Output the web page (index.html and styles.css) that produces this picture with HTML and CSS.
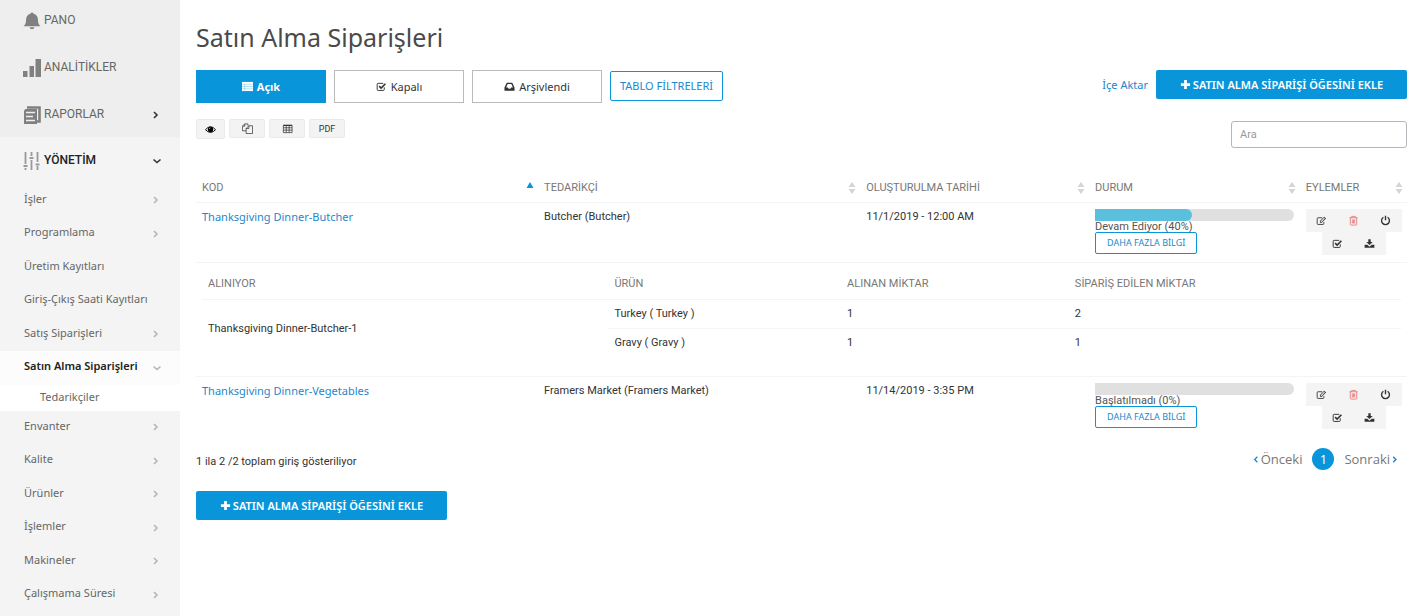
FILE: index.html
```html
<!DOCTYPE html>
<html lang="tr">
<head>
<meta charset="utf-8">
<title>Satın Alma Siparişleri</title>
<link rel="stylesheet" href="styles.css">
</head>
<body>
<svg class="sprite" aria-hidden="true">
  <symbol id="right" viewBox="0 0 8 10"><path d="M2 2 5 5 2 8" fill="none" stroke="currentColor" stroke-width="1.600"/></symbol>
  <symbol id="down" viewBox="0 0 10 8"><path d="M1.500 2.500 5 5.500 8.500 2.500" fill="none" stroke="currentColor" stroke-width="1.600"/></symbol>
  <symbol id="left" viewBox="0 0 8 10"><path d="M5.500 2 2.500 5 5.500 8" fill="none" stroke="currentColor" stroke-width="1.400"/></symbol>
  <symbol id="plus" viewBox="0 0 12 12"><path d="M4.500 1h3v3.500h3.500v3H7.500V11h-3V7.500H1v-3h3.500z" fill="currentColor"/></symbol>
  <symbol id="check" viewBox="0 0 14 12"><path d="M10.500 7v2.800a1.200 1.200 0 0 1-1.200 1.200H2.700a1.200 1.200 0 0 1-1.200-1.200V3.200A1.200 1.200 0 0 1 2.700 2h6.500" fill="none" stroke="currentColor" stroke-width="1.200"/><path d="M4 5.500 6.500 8 12 2.500" fill="none" stroke="currentColor" stroke-width="2"/></symbol>
  <symbol id="edit" viewBox="0 0 14 12"><path d="M10 8v2a1 1 0 0 1-1 1H2.500a1 1 0 0 1-1-1V3.500a1 1 0 0 1 1-1H8" fill="none" stroke="currentColor" stroke-width="1.100"/><path d="M5 6.700 10.500 1.200l2.300 2.300L7.300 9H5zM6 7v1h1L11.300 3.600l-1-1z" fill="currentColor" fill-rule="evenodd"/></symbol>
  <symbol id="trash" viewBox="0 0 12 12"><path d="M1.500 3h9M4 3V1.500h4V3M2.500 3v7.200q0 .8.800.8h5.400q.8 0 .8-.8V3M4.700 4.800v4.500M6 4.800v4.500M7.300 4.800v4.500" fill="none" stroke="currentColor" stroke-width=".9"/></symbol>
  <symbol id="power" viewBox="0 0 12 12"><path d="M3.700 2.500a4.300 4.300 0 1 0 4.600 0M6 .800v5" fill="none" stroke="currentColor" stroke-width="1.500"/></symbol>
  <symbol id="download" viewBox="0 0 14 12"><path d="M5.500.5h3V4h2.600L7 8 2.900 4h2.600zM.8 7.500h3.400L7 10l2.800-2.500h3.400v4H.8z" fill="currentColor"/></symbol>
  <symbol id="sort" viewBox="0 0 8 12"><path d="M4 0 7.500 5h-7zM.5 7h7L4 12z" fill="currentColor"/></symbol>
</svg>
<div class="app">
  <nav class="sidebar">
    <ul class="top">
      <li><a href="#"><svg class="ico" viewBox="0 0 18 18"><path d="M9 .5q1.300 0 1.500 1.300C13.500 2.500 15 5 15 8c0 3 .5 4.500 2.500 6.300H.5C2.500 12.500 3 11 3 8c0-3 1.500-5.500 4.500-6.200Q7.700.5 9 .5zM6.500 15.300h5q-.5 2-2.500 2t-2.500-2z" fill="currentColor"/></svg>PANO</a></li>
      <li><a href="#"><svg class="ico" viewBox="0 0 18 18"><path d="M0 12h4.500v6H0zM6.500 7h4.500v11H6.500zM12.500 0H18v18h-5.500z" fill="currentColor"/></svg>ANALİTİKLER</a></li>
      <li><a href="#"><svg class="ico" viewBox="0 0 18 18"><path d="M4 1.500h12.500v14H14" fill="none" stroke="currentColor" stroke-width="2.600"/><path d="M1 4.500 2.500 3H14v15H1z" fill="currentColor"/><path d="M3 6.500h9M3 10.500h7M3 14.500h9" stroke="#eee" stroke-width="1.300"/></svg>RAPORLAR<svg class="chev" viewBox="0 0 8 10"><use href="#right"/></svg></a></li>
      <li class="open"><a href="#"><svg class="ico" viewBox="0 0 18 18"><path d="M2.500 0v12M2.500 16v2M8.500 0v4M8.500 8v10M14.500 0v10M14.500 14v4" stroke="currentColor" stroke-width="1.800"/><path d="M.5 14h4M6.500 6h4M12.500 12.500h4" stroke="currentColor" stroke-width="2.200"/></svg>YÖNETİM<svg class="chev wide" viewBox="0 0 10 8"><use href="#down"/></svg></a></li>
    </ul>
    <ul class="sub">
      <li><a href="#">İşler<svg class="chev"><use href="#right"/></svg></a></li>
      <li><a href="#">Programlama<svg class="chev"><use href="#right"/></svg></a></li>
      <li><a href="#">Üretim Kayıtları</a></li>
      <li><a href="#">Giriş-Çıkış Saati Kayıtları</a></li>
      <li><a href="#">Satış Siparişleri<svg class="chev"><use href="#right"/></svg></a></li>
      <li class="active"><a href="#">Satın Alma Siparişleri<svg class="chev wide"><use href="#down"/></svg></a>
        <ul class="leaf"><li><a href="#">Tedarikçiler</a></li></ul></li>
      <li><a href="#">Envanter<svg class="chev"><use href="#right"/></svg></a></li>
      <li><a href="#">Kalite<svg class="chev"><use href="#right"/></svg></a></li>
      <li><a href="#">Ürünler<svg class="chev"><use href="#right"/></svg></a></li>
      <li><a href="#">İşlemler<svg class="chev"><use href="#right"/></svg></a></li>
      <li><a href="#">Makineler<svg class="chev"><use href="#right"/></svg></a></li>
      <li><a href="#">Çalışmama Süresi<svg class="chev"><use href="#right"/></svg></a></li>
    </ul>
  </nav>
  <main class="main">
    <h1>Satın Alma Siparişleri</h1>
    <div class="bar">
      <button class="tab on"><svg class="i" viewBox="0 0 12 12"><path d="M0 1h12v10H0z" fill="currentColor"/><path d="M0 3.500h12M0 6h12M0 8.500h12M3 3v8" stroke="#0895da" stroke-width=".3"/></svg>Açık</button>
      <button class="tab"><svg class="i"><use href="#check"/></svg>Kapalı</button>
      <button class="tab"><svg class="i" viewBox="0 0 12 12"><path d="M3 2h6l2.500 5v3.500H.5V7zM4 3.300 2.300 7h2l.7 1.500h2L7.700 7h2L8 3.300z" fill="currentColor" fill-rule="evenodd"/></svg>Arşivlendi</button>
      <button class="filter">TABLO FİLTRELERİ</button>
      <a class="import" href="#">İçe Aktar</a>
      <button class="add"><svg class="i"><use href="#plus"/></svg>SATIN ALMA SİPARİŞİ ÖĞESİNİ EKLE</button>
    </div>
    <div class="tools">
      <button class="tool eye" aria-label="Sütunlar"><svg class="i" viewBox="0 0 12 12"><path d="M.5 6.200Q6-.3 11.500 6.200 6 12.200.5 6.200z" fill="none" stroke="currentColor"/><circle cx="6" cy="6" r="2.900" fill="currentColor"/><path d="M4.600 5.500q.2-1 1.200-1.200" stroke="#fff" stroke-width=".7" fill="none"/></svg></button>
      <button class="tool" aria-label="Kopyala"><svg class="i" viewBox="0 0 12 12"><path d="M4.500 8.500h-4v-5l2.500-2.500h3.500v2M3 1v2.500H.5M7.500 3H11.500v8.500h-7V6zM7.500 3v3h-3" fill="none" stroke="currentColor" stroke-width=".8"/></svg></button>
      <button class="tool" aria-label="Tablo"><svg class="i" viewBox="0 0 12 12"><path d="M1.500 2.500h9.500v8H1.500zM1.500 5.200H11M1.500 7.800H11M4.600 2.500v8M7.800 2.500v8" fill="none" stroke="currentColor" stroke-width=".8"/><path d="M1.500 2h9.500v1.200H1.500z" fill="currentColor"/></svg></button>
      <button class="tool">PDF</button>
      <input class="search" type="search" placeholder="Ara" aria-label="Ara">
    </div>
    <table class="grid">
      <colgroup><col class="c1"><col class="c2"><col class="c3"><col class="c4"><col></colgroup>
      <thead><tr>
        <th><span class="th">KOD<svg class="asc" viewBox="0 0 8 12"><path d="M4 0 7.500 6h-7z" fill="currentColor"/></svg></span></th>
        <th><span class="th">TEDARİKÇİ<svg class="sort"><use href="#sort"/></svg></span></th>
        <th><span class="th">OLUŞTURULMA TARİHİ<svg class="sort"><use href="#sort"/></svg></span></th>
        <th><span class="th">DURUM<svg class="sort"><use href="#sort"/></svg></span></th>
        <th><span class="th">EYLEMLER<svg class="sort"><use href="#sort"/></svg></span></th>
      </tr></thead>
      <tbody>
        <tr>
          <td><a class="code" href="#">Thanksgiving Dinner-Butcher</a></td>
          <td>Butcher (Butcher)</td>
          <td>11/1/2019 - 12:00 AM</td>
          <td><div class="track"><div class="fill" style="width:49%"></div></div><div class="state">Devam Ediyor (40%)</div><button class="more">DAHA FAZLA BİLGİ</button></td>
          <td><div class="acts"><button aria-label="Düzenle"><svg class="i"><use href="#edit"/></svg></button><button class="del" aria-label="Sil"><svg class="i"><use href="#trash"/></svg></button><button aria-label="Kapat"><svg class="i"><use href="#power"/></svg></button><button aria-label="Tamamla"><svg class="i"><use href="#check"/></svg></button><button aria-label="İndir"><svg class="i"><use href="#download"/></svg></button></div></td>
        </tr>
        <tr class="detail"><td colspan="5">
          <table class="inner">
            <colgroup><col class="d1"><col class="d2"><col class="d3"><col></colgroup>
            <thead><tr><th>ALINIYOR</th><th>ÜRÜN</th><th>ALINAN MİKTAR</th><th>SİPARİŞ EDİLEN MİKTAR</th></tr></thead>
            <tbody>
              <tr><td rowspan="2">Thanksgiving Dinner-Butcher-1</td><td>Turkey ( Turkey )</td><td>1</td><td>2</td></tr>
              <tr><td>Gravy ( Gravy )</td><td>1</td><td>1</td></tr>
            </tbody>
          </table>
        </td></tr>
        <tr>
          <td><a class="code" href="#">Thanksgiving Dinner-Vegetables</a></td>
          <td>Framers Market (Framers Market)</td>
          <td>11/14/2019 - 3:35 PM</td>
          <td><div class="track"></div><div class="state">Başlatılmadı (0%)</div><button class="more">DAHA FAZLA BİLGİ</button></td>
          <td><div class="acts"><button aria-label="Düzenle"><svg class="i"><use href="#edit"/></svg></button><button class="del" aria-label="Sil"><svg class="i"><use href="#trash"/></svg></button><button aria-label="Kapat"><svg class="i"><use href="#power"/></svg></button><button aria-label="Tamamla"><svg class="i"><use href="#check"/></svg></button><button aria-label="İndir"><svg class="i"><use href="#download"/></svg></button></div></td>
        </tr>
      </tbody>
    </table>
    <div class="foot">
      <span>1 ila 2 /2 toplam giriş gösteriliyor</span>
      <div class="pager"><a href="#"><svg class="arr"><use href="#left"/></svg>Önceki</a><a class="cur" href="#">1</a><a href="#">Sonraki<svg class="arr"><use href="#right"/></svg></a></div>
    </div>
    <button class="add"><svg class="i"><use href="#plus"/></svg>SATIN ALMA SİPARİŞİ ÖĞESİNİ EKLE</button>
  </main>
</div>
</body>
</html>
```
FILE: styles.css
```css
* { box-sizing: border-box; }
body { margin: 0; font: 11px/16px Roboto, sans-serif; color: #333; background: #fff; }
ul { list-style: none; margin: 0; padding: 0; }
a { color: #1d87cc; text-decoration: none; }
button { font: inherit; color: inherit; cursor: pointer; margin: 0; }
.sprite { display: none; }
.app { display: flex; min-height: 100vh; }

.sidebar { flex: 0 0 180px; background: #f4f4f4; overflow: hidden; }
.sidebar a { display: flex; align-items: center; color: #666; }
.top { margin-top: -4px; background: #eee; font-size: 12px; }
.top a { height: 47px; padding: 0 17px 0 23px; }
.top .ico { width: 18px; height: 18px; margin-right: 3px; margin-top: 3px; color: #808080; }
.top .chev { color: #333; margin-top: 3px; }
.top .open { background: #f4f4f4; }
.top .open a { color: #222; font-weight: 500; padding-bottom: 2px; }
.top .open .ico { color: #999; }
.chev { width: 8px; height: 10px; margin: 3px 3px 0 auto; color: #b5b5b5; }
.chev.wide { width: 10px; height: 8px; margin-right: 1px; }
.sub a { height: 33px; padding: 0 17px 4px 24px; font-family: "Noto Sans", sans-serif; white-space: nowrap; }
.sub > li:nth-child(even) > a { height: 34px; }
.sub .active > a { background: #fcfcfc; color: #222; font-weight: 600; }
.sub .leaf { background: #fff; }
.sub .leaf a { height: 26px; padding: 0 0 2px 40px; }

.main { flex: 1; min-width: 0; padding: 22px 15px 22px 16px; }
h1 { margin: 0 0 18px; font: 400 25px/30px "Noto Sans", sans-serif; color: #4a4a4a; }
.i { width: 11px; height: 11px; flex: none; }
.bar { display: flex; align-items: flex-start; gap: 8px; font-family: "Noto Sans", sans-serif; }
.tab { display: flex; align-items: center; justify-content: center; gap: 4px; width: 130px; height: 33px; border: 1px solid #bbb; background: #fff; }
.tab.on { background: #0895da; border-color: #0895da; color: #fff; font-weight: 700; }
.filter { height: 30px; margin-top: 1px; padding: 0 9px; border: 1px solid #0895da; border-radius: 2px; background: #fff; color: #2089cd; }
.import { margin-left: auto; line-height: 30px; }
.add { display: flex; align-items: center; justify-content: center; gap: 2px; width: 251px; height: 29px; border: 0; border-radius: 2px; background: #0895da; color: #fff; font: 600 11px/16px "Noto Sans", sans-serif; }
.tools { display: flex; align-items: flex-start; gap: 4px; margin-top: 16px; }
.tool { display: flex; align-items: center; justify-content: center; width: 36px; height: 19px; padding: 0; border: 1px solid #eaeaea; border-radius: 2px; background: #f3f3f3; font-size: 9px; line-height: 12px; }
.eye { width: 29px; height: 20px; color: #000; }
.search { width: 176px; height: 27px; margin: 2px 0 0 auto; padding: 0 8px; border: 1px solid #b5b5bb; border-radius: 3px; font: inherit; background: #fff; }
.search::placeholder { color: #999; }

table { width: 100%; border-collapse: collapse; table-layout: fixed; }
th, td { text-align: left; vertical-align: top; padding: 6px; font-weight: 400; }
th { color: #777; }
.grid { margin-top: 24px; }
.c1 { width: 28.25%; } .c2 { width: 26.6%; } .c3 { width: 18.9%; } .c4 { width: 17.4%; }
.grid > thead th { padding: 8px 0 6px 6px; }
.th { display: flex; align-items: center; justify-content: space-between; }
.sort, .asc { width: 8px; height: 12px; margin-right: 4px; color: #d5d5d5; }
.asc { color: #0895da; }
.grid > tbody > tr { border-top: 1px solid #f4f4f4; }
.grid > tbody > tr > td { padding-bottom: 7px; }
.code { font-family: "Noto Sans", sans-serif; }
.track { height: 12px; background: #e0e0e0; border-radius: 0 6px 6px 0; }
.fill { height: 12px; background: #5bc0de; border-radius: 0 6px 6px 0; }
.state { line-height: 11px; color: #555; }
.more { display: block; height: 22px; padding: 0 11px; border: 1px solid #0895da; border-radius: 2px; background: #fff; color: #2089cd; font: 9px/12px "Noto Sans", sans-serif; }
.acts { display: flex; flex-wrap: wrap; justify-content: center; margin: 0 -1px 0 0; }
.acts button { display: flex; align-items: center; justify-content: center; width: 32px; height: 23px; padding: 0; border: 0; background: #f4f4f4; }
.acts .del { color: #e57373; }
.grid > tbody > .detail > td { padding-top: 7px; padding-bottom: 19px; }
.inner th { padding: 6px 6px 7px; }
.inner td { border-top: 1px solid #f4f4f4; }
.inner td[rowspan] { vertical-align: middle; }
.d1 { width: 33.9%; } .d2 { width: 19.4%; } .d3 { width: 19%; }

.foot { display: flex; justify-content: space-between; align-items: flex-end; margin: 12px 0 21px; }
.pager { display: flex; align-items: center; gap: 10px; padding-right: 8px; font: 13px/22px "Open Sans", sans-serif; }
.pager a { display: flex; align-items: center; gap: 1px; color: #777; }
.pager .cur { justify-content: center; width: 22px; height: 22px; border-radius: 50%; background: #0895da; color: #fff; }
.arr { width: 8px; height: 9px; color: #2089cd; }
```
